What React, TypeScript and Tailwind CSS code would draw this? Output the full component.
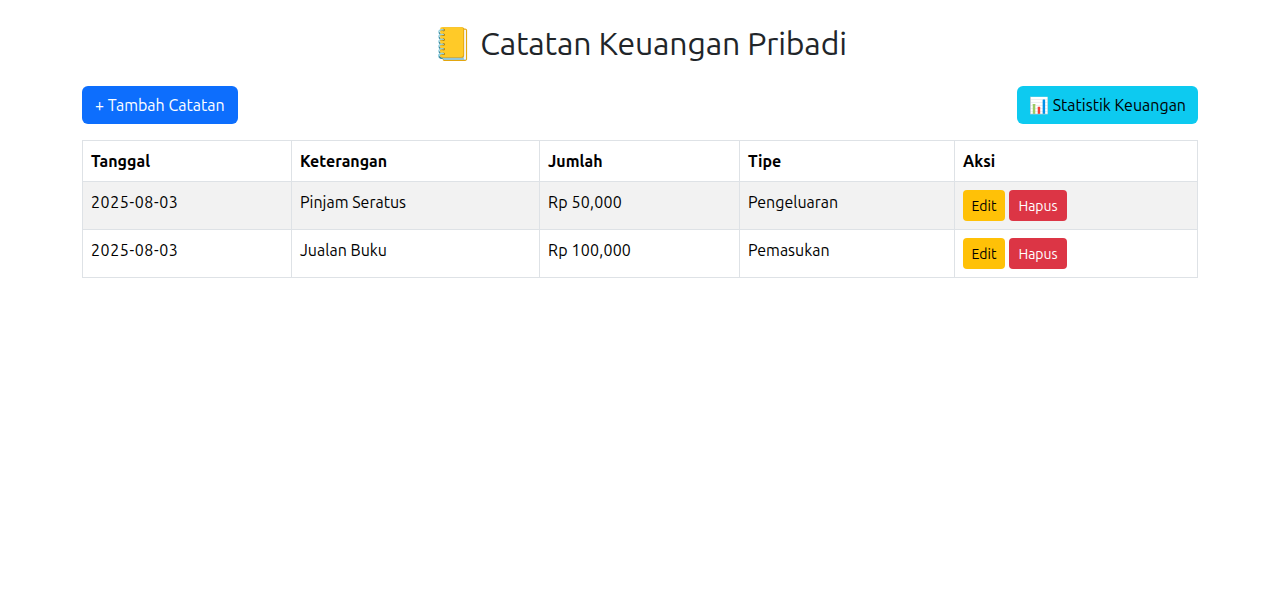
const rows = [
  { tanggal: "2025-08-03", ket: "Pinjam Seratus", jumlah: "Rp 50,000", tipe: "Pengeluaran" },
  { tanggal: "2025-08-03", ket: "Jualan Buku", jumlah: "Rp 100,000", tipe: "Pemasukan" },
];

const App = () => {
  return (
    <div className="min-h-[601px] bg-white text-[#212529] text-base leading-6 font-['Ubuntu',sans-serif]">
      <div className="w-[1140px] mx-auto px-3 pt-6">
        <h2 className="text-[32px] leading-[38.4px] font-normal tracking-[-0.16px] text-center mb-6">📒 Catatan Keuangan Pribadi</h2>

        <div className="flex justify-between mb-4">
          <button className="h-[38px] px-[13px] bg-[#0d6efd] text-white rounded-md">+ Tambah Catatan</button>
          <button className="h-[38px] px-3 bg-[#0dcaf0] text-black rounded-md">📊 Statistik Keuangan</button>
        </div>

        <table className="w-full table-fixed border-collapse text-black">
          <thead>
            <tr>
              <th className="w-[209px] border border-[#dee2e6] p-2 text-left font-bold">Tanggal</th>
              <th className="w-[248px] border border-[#dee2e6] p-2 text-left font-bold">Keterangan</th>
              <th className="w-[200px] border border-[#dee2e6] p-2 text-left font-bold">Jumlah</th>
              <th className="w-[215px] border border-[#dee2e6] p-2 text-left font-bold">Tipe</th>
              <th className="border border-[#dee2e6] p-2 text-left font-bold">Aksi</th>
            </tr>
          </thead>
          <tbody>
            {rows.map((row, i) => (
              <tr key={i} className={i % 2 === 0 ? "bg-[#f2f2f2]" : "bg-white"}>
                <td className="border border-[#dee2e6] p-2 align-top tracking-[0.6px]">{row.tanggal}</td>
                <td className="border border-[#dee2e6] p-2 align-top">{row.ket}</td>
                <td className="border border-[#dee2e6] p-2 align-top tracking-[0.2px]">{row.jumlah}</td>
                <td className="border border-[#dee2e6] p-2 align-top">{row.tipe}</td>
                <td className="border border-[#dee2e6] p-2 align-top">
                  <div className="flex gap-1">
                    <button className="h-[31px] w-[42px] text-sm bg-[#ffc107] text-black rounded-[4px]">Edit</button>
                    <button className="h-[31px] w-[58px] text-sm bg-[#dc3545] text-white rounded-[4px]">Hapus</button>
                  </div>
                </td>
              </tr>
            ))}
          </tbody>
        </table>
      </div>
    </div>
  );
};

export default App;
